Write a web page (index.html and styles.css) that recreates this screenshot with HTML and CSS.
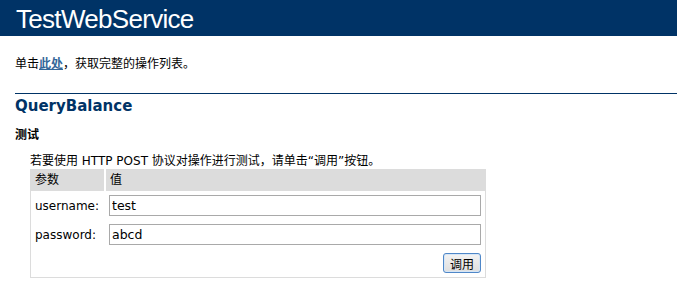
FILE: index.html
```html
<!DOCTYPE html>
<html lang="zh-CN">
<head>
    <meta charset="UTF-8">
    <title>TestWebService Web 服务</title>
    <link rel="stylesheet" href="styles.css">
</head>
<body>
    <div class="content">
        <p class="heading1">TestWebService</p>

        <p class="intro">单击<a href="#">此处</a>，获取完整的操作列表。</p>

        <h2>QueryBalance</h2>

        <h3>测试</h3>

        <p>若要使用 HTTP POST 协议对操作进行测试，请单击“调用”按钮。</p>

        <form action="#" method="POST">
            <table class="frm">
                <tr>
                    <td class="frmHeader first">参数</td>
                    <td class="frmHeader">值</td>
                </tr>
                <tr>
                    <td class="frmText">username:</td>
                    <td><input class="frmInput" type="text" name="username" value="test"></td>
                </tr>
                <tr>
                    <td class="frmText">password:</td>
                    <td><input class="frmInput" type="text" name="password" value="abcd"></td>
                </tr>
                <tr>
                    <td></td>
                    <td class="frmButtons"><input class="button" type="submit" value="调用"></td>
                </tr>
            </table>
        </form>
    </div>
</body>
</html>
```

FILE: styles.css
```css
body {
    margin: 0;
    color: #000000;
    background-color: white;
    font-family: "DejaVu Sans", "Noto Sans CJK SC", sans-serif;
    font-size: 12px;
}
.content {
    padding-left: 30px;
}
p {
    margin: 0 0 0 0;
    line-height: 16px;
}
.heading1 {
    margin: 0 0 0 -30px;
    height: 34px;
    padding: 2px 0 0 16px;
    background-color: #003366;
    color: #ffffff;
    font-family: "Liberation Sans", sans-serif;
    font-size: 26px;
    letter-spacing: -0.7px;
    line-height: 34px;
    font-weight: normal;
}
.intro {
    margin: 20px 0 0 -15px;
}
a:link, a:visited {
    color: #336699;
    font-weight: bold;
    text-decoration: underline;
}
h2 {
    margin: 21px 0 0 -15px;
    padding-top: 3px;
    border-top: 1px solid #003366;
    color: #003366;
    font-size: 15px;
    line-height: 18px;
    font-weight: bold;
}
h3 {
    margin: 12px 0 0 -15px;
    font-size: 12px;
    line-height: 16px;
    font-weight: bold;
}
h3 + p {
    margin-top: 10px;
}
form {
    margin: 0;
}
.frm {
    width: 456px;
    margin-top: 0;
    border: 1px solid #dcdcdc;
    border-collapse: collapse;
    border-spacing: 0;
}
.frm td {
    padding: 4px;
    vertical-align: middle;
}
.frm .frmHeader {
    padding: 2px 4px;
    background: #dcdcdc;
    line-height: 17px;
}
.frm .first {
    border-right: 2px solid white;
    width: 65px;
}
.frmText {
    line-height: 16px;
}
.frmInput {
    box-sizing: border-box;
    width: 372px;
    height: 21px;
    margin: 0;
    padding: 0 2px;
    border: 1px solid #a9a9a9;
    font-family: "DejaVu Sans", sans-serif;
    font-size: 12.5px;
    display: block;
}
.frmButtons {
    text-align: right;
}
.button {
    box-sizing: border-box;
    width: 38px;
    height: 20px;
    margin: 0 0 0 auto;
    padding: 0;
    display: block;
    border: 1px solid #4f87c8;
    border-radius: 3px;
    background: linear-gradient(#f3f3f3, #dedede);
    box-shadow: inset 0 0 0 1px #d6e6f6;
    font-family: "Noto Sans CJK SC", sans-serif;
    font-size: 12px;
    color: #000;
}
```
